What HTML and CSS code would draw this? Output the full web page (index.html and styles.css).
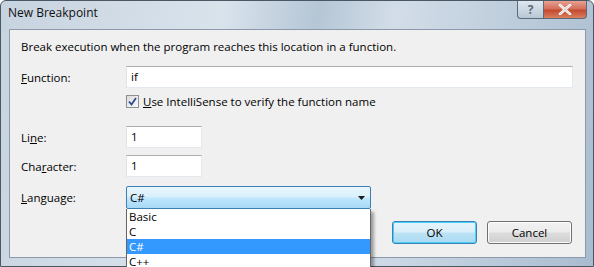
FILE: index.html
```html
<!DOCTYPE html>
<html lang="en">
<head>
    <meta charset="UTF-8">
    <title>New Breakpoint</title>
    <link rel="stylesheet" href="styles.css">
</head>
<body>
    <div class="window">
        <div class="titlebar">
            <span class="title">New Breakpoint</span>
            <div class="caption">
                <span class="cap-btn help">?</span>
                <span class="cap-btn close">
                    <svg width="14" height="11" viewBox="0 0 14 11"><path d="M2 1 L12 10 M12 1 L2 10" stroke="#fff" stroke-width="2.6" stroke-linecap="round"/><path d="M2 1 L12 10 M12 1 L2 10" stroke="#5a1a10" stroke-width="0.6" fill="none" opacity="0.4"/></svg>
                </span>
            </div>
        </div>
        <div class="client">
            <p class="intro">Break execution when the program reaches this location in a function.</p>

            <div class="row">
                <label class="lbl" for="fn"><u>F</u>unction:</label>
                <div class="field wide" id="fn">if</div>
            </div>
            <div class="check-row">
                <span class="checkbox">
                    <svg width="9" height="9" viewBox="0 0 9 9"><path d="M1 4.5 L3.5 7.5 L8 1" stroke="#2c4e8a" stroke-width="1.8" fill="none"/></svg>
                </span>
                <span><u>U</u>se IntelliSense to verify the function name</span>
            </div>

            <div class="row line-row">
                <label class="lbl">Li<u>n</u>e:</label>
                <div class="field short">1</div>
            </div>
            <div class="row char-row">
                <label class="lbl">Cha<u>r</u>acter:</label>
                <div class="field short">1</div>
            </div>

            <div class="row lang-row">
                <label class="lbl"><u>L</u>anguage:</label>
                <div class="combo-wrap">
                    <div class="combo">
                        <span>C#</span>
                        <svg width="7" height="4" viewBox="0 0 7 4"><path d="M0 0 H7 L3.5 4 Z" fill="#1a1a1a"/></svg>
                    </div>
                    <ul class="list">
                        <li>Basic</li>
                        <li>C</li>
                        <li class="sel">C#</li>
                        <li>C++</li>
                    </ul>
                </div>
            </div>

            <div class="buttons">
                <button class="btn default">OK</button>
                <button class="btn">Cancel</button>
            </div>
        </div>
    </div>
</body>
</html>
```

FILE: styles.css
```css
body {
    margin: 0;
    width: 594px;
    height: 267px;
    overflow: hidden;
    font-family: "Open Sans", "Noto Sans", sans-serif;
    font-size: 11.5px;
    color: #000;
}
.window {
    height: 267px;
    box-sizing: border-box;
    display: flex;
    flex-direction: column;
    padding: 0 7px 8px 8px;
    background: linear-gradient(100deg, #c7d3df 0%, #d9e3ec 35%, #b5c6d6 50%, #d2dde8 62%, #a9bccf 100%);
    border: 1px solid #4a5866;
    border-radius: 6px 6px 0 0;
}
.titlebar {
    height: 28px;
    display: flex;
    justify-content: space-between;
    align-items: flex-start;
}
.title {
    margin-top: 3px;
    margin-left: -1px;
    font-size: 12px;
    color: #111;
}
.caption {
    display: flex;
    margin-right: -1px;
}
.cap-btn {
    height: 17px;
    display: flex;
    align-items: center;
    justify-content: center;
    border: 1px solid #5d6a78;
    border-top: none;
}
.help {
    width: 25px;
    border-radius: 0 0 0 4px;
    border-right: none;
    background: linear-gradient(#dfe7ef, #b9c8d6);
    color: #5c6b7c;
    font-size: 12px;
    font-weight: bold;
}
.close {
    width: 42px;
    border-radius: 0 0 4px 0;
    background: linear-gradient(#e6a194 0%, #d5705c 45%, #c44a30 55%, #d8805f 100%);
}
.client {
    flex: 1;
    position: relative;
    background: #f0f0f0;
    border: 1px solid #8b9aaa;
    padding: 0 0 0 11px;
}
.intro {
    height: 16px;
    line-height: 16px;
    margin: 9px 0 11px 0;
}
.row {
    display: flex;
    align-items: center;
}
.lbl {
    width: 105px;
}
.field {
    height: 22px;
    box-sizing: border-box;
    background: #fff;
    border: 1px solid #abadb3;
    border-color: #abadb3 #e3e9ef #e3e9ef #e2e3ea;
    padding: 0 0 0 4px;
    line-height: 20px;
}
.wide {
    width: 447px;
}
.short {
    width: 76px;
}
.check-row {
    height: 16px;
    display: flex;
    align-items: center;
    margin: 5px 0 17px 105px;
}
.checkbox {
    width: 11px;
    height: 11px;
    margin-right: 4px;
    display: flex;
    align-items: center;
    justify-content: center;
    border: 1px solid #8e8f8f;
    background: linear-gradient(135deg, #dcdcdc, #fbfbfb);
}
.char-row {
    margin-top: 7px;
}
.lang-row {
    margin-top: 9px;
}
.combo-wrap {
    position: relative;
}
.combo {
    width: 245px;
    height: 23px;
    box-sizing: border-box;
    display: flex;
    align-items: center;
    justify-content: space-between;
    padding: 0 5px 0 3px;
    border: 1px solid #3c7fb1;
    border-radius: 2px;
    background: linear-gradient(#eaf6fd 0%, #d9f0fc 45%, #bee6fd 55%, #a7d9f5 100%);
}
.list {
    position: absolute;
    top: 23px;
    left: 0;
    width: 245px;
    box-sizing: border-box;
    margin: 0;
    padding: 0;
    list-style: none;
    background: #fff;
    border: 1px solid #646464;
    border-top: none;
    box-shadow: 3px 3px 3px rgba(0, 0, 0, 0.35);
}
.list li {
    height: 15px;
    line-height: 15px;
    padding-left: 2px;
}
.list .sel {
    background: #3399ff;
    color: #fff;
}
.buttons {
    position: absolute;
    right: 13px;
    bottom: 13px;
    display: flex;
    gap: 10px;
}
.btn {
    width: 85px;
    height: 23px;
    font-family: inherit;
    font-size: 11.5px;
    border: 1px solid #707070;
    border-radius: 3px;
    background: linear-gradient(#f2f2f2 0%, #ebebeb 48%, #dddddd 52%, #cfcfcf 100%);
    box-shadow: inset 0 0 0 1px #fcfcfc;
}
.btn.default {
    border-color: #3c7fb1;
    background: linear-gradient(#e7f4fa 0%, #d9eef9 48%, #bde3f6 52%, #a9d9f1 100%);
    box-shadow: inset 0 0 0 1px #48d1f6;
}
```
